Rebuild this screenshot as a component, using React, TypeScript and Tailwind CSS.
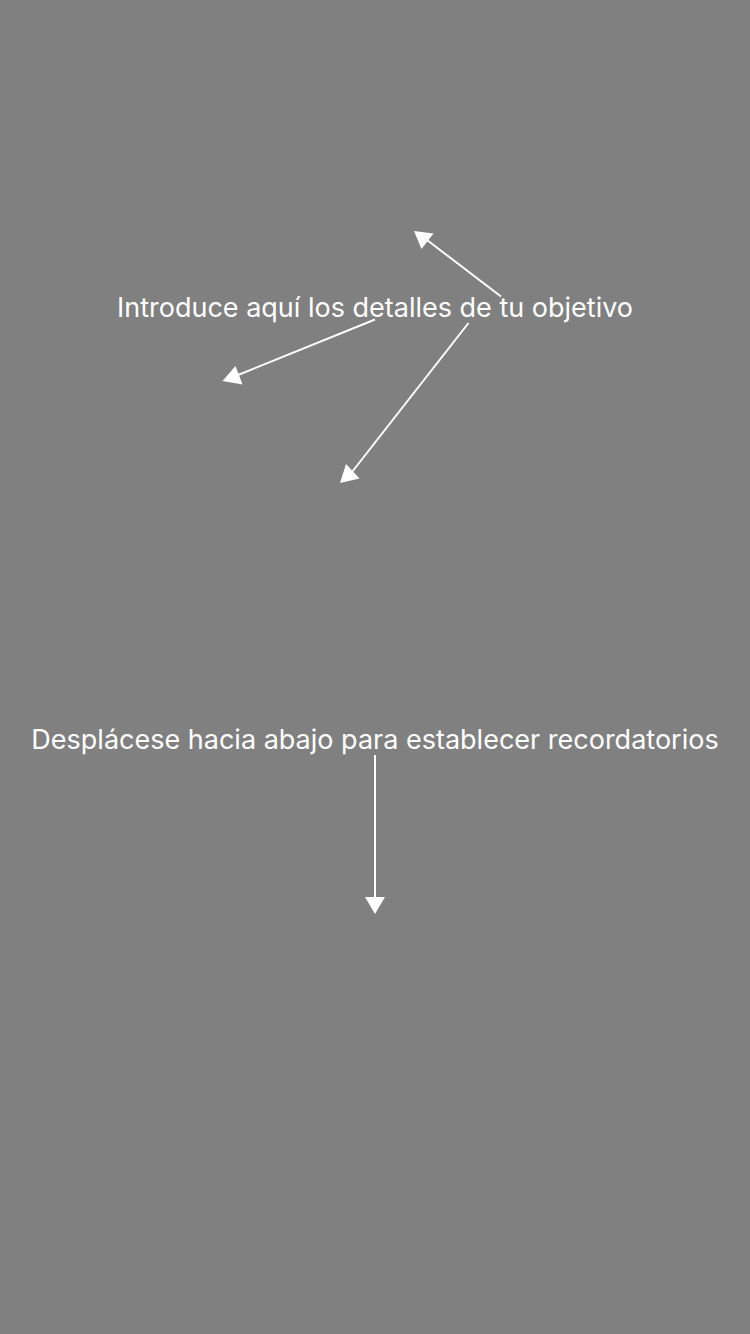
function GoalArrows() {
  return (
    <svg
      aria-hidden="true"
      className="absolute left-1/2 top-0 h-[260px] w-[300px] -translate-x-[160px]"
      viewBox="215 225 300 260"
      fill="white"
      stroke="none"
    >
      <g stroke="white" strokeWidth="2">
        <path d="M501 296.500L427 240" />
        <path d="M375 319.500L238 375" />
        <path d="M468.500 323L352 472" />
      </g>
      <path d="M414 231L433.500 233.500L421.500 249Z" />
      <path d="M222.500 381L235.500 366L242.500 384.500Z" />
      <path d="M340 483L346 464L359.500 478.500Z" />
    </svg>
  );
}

function ScrollArrow() {
  return (
    <svg
      aria-hidden="true"
      className="h-[160px] w-5"
      viewBox="0 0 20 160"
      fill="white"
    >
      <path d="M9 0H11V142H20L10 159L0 142H9Z" />
    </svg>
  );
}

export default function App() {
  return (
    <main className="flex min-h-screen flex-col items-center bg-[#808080] pt-[225px] font-['Inter','Liberation_Sans',sans-serif] text-[27px] leading-[30px] text-white">
      <section className="relative flex w-full justify-center pb-[402px] pt-[68px]">
        <GoalArrows />
        <p className="relative whitespace-nowrap">
          Introduce aquí los detalles de tu objetivo
        </p>
      </section>
      <section className="flex w-full flex-col items-center">
        <p className="whitespace-nowrap">
          Desplácese hacia abajo para establecer recordatorios
        </p>
        <ScrollArrow />
      </section>
    </main>
  );
}
